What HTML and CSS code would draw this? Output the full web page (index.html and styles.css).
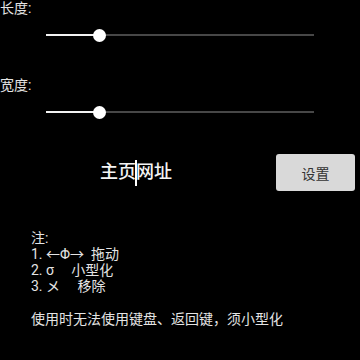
FILE: index.html
```html
<!DOCTYPE html>
<html lang="zh-cn">
<head>
    <meta charset="UTF-8">
    <meta name="viewport" content="width=device-width, initial-scale=1.0">
    <title>设置</title>
    <link rel="stylesheet" href="styles.css">
</head>
<body>

<div class="field">
    <div class="label">长度:</div>
    <div class="slider">
        <div class="track">
            <div class="fill" style="width: 20%;"></div>
            <div class="thumb" style="left: 20%;"></div>
        </div>
    </div>
</div>

<div class="field">
    <div class="label">宽度:</div>
    <div class="slider">
        <div class="track">
            <div class="fill" style="width: 20%;"></div>
            <div class="thumb" style="left: 20%;"></div>
        </div>
    </div>
</div>

<div class="url-row">
    <div class="url-input">主页<span class="caret"></span>网址</div>
    <button class="set-btn">设置</button>
</div>

<div class="notes">
    <div>注:</div>
    <div>1. ←Φ→ &nbsp;拖动</div>
    <div>2. σ &nbsp;&nbsp;&nbsp;&nbsp;小型化</div>
    <div>3. メ &nbsp;&nbsp;&nbsp;&nbsp;移除</div>
    <p class="warn">使用时无法使用键盘、返回键，须小型化</p>
</div>

</body>
</html>
```

FILE: styles.css
```css
body {
    margin: 0;
    background: #000;
    color: #e4e4e4;
    font-family: Roboto, "Noto Sans CJK SC", sans-serif;
    font-size: 14px;
    width: 360px;
    height: 360px;
    overflow: hidden;
}
.field {
    margin-bottom: 23px;
}
.label {
    line-height: 16px;
}
.slider {
    height: 38px;
    padding: 0 46px;
    display: flex;
    align-items: center;
}
.track {
    position: relative;
    flex: 1;
    height: 2px;
    background: #474747;
}
.fill {
    height: 100%;
    background: #f2f2f2;
}
.thumb {
    position: absolute;
    top: 50%;
    width: 13px;
    height: 13px;
    margin: -6.5px 0 0 -6.5px;
    border-radius: 50%;
    background: #fff;
}
.url-row {
    display: flex;
    align-items: center;
    gap: 4px;
    padding-right: 5px;
}
.url-input {
    flex: 1;
    text-align: center;
    font-size: 18px;
    font-weight: 500;
    color: #f4f4f4;
    line-height: 26px;
}
.caret {
    display: inline-block;
    width: 2px;
    height: 26px;
    margin: 0 -1px;
    vertical-align: middle;
    background: #fff;
}
.set-btn {
    width: 79px;
    height: 37px;
    border: none;
    border-radius: 3px;
    background: #d9d9d9;
    color: #333;
    font-family: inherit;
    font-size: 14px;
}
.notes {
    margin-top: 39px;
    padding-left: 31px;
    line-height: 16px;
}
.warn {
    margin: 17px 0 0;
}
```
